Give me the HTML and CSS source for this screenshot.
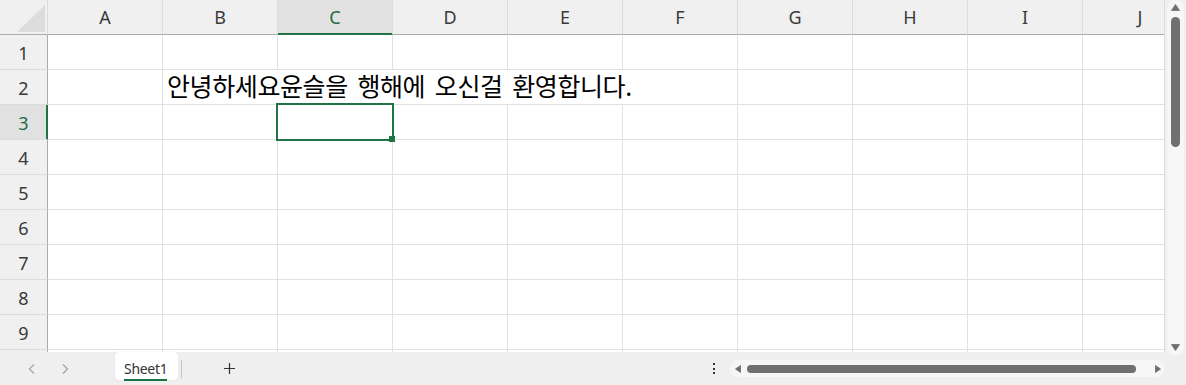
FILE: index.html
```html
<!DOCTYPE html>
<html lang="ko">
<head>
<meta charset="utf-8">
<title>Sheet1</title>
<link rel="stylesheet" href="styles.css">
</head>
<body>
<div class="app">
  <div class="sheet">
    <div class="grid">
      <div class="ch corner"><i class="tri"></i></div>
      <div class="ch">A</div><div class="ch">B</div><div class="ch sel">C</div><div class="ch">D</div><div class="ch">E</div><div class="ch">F</div><div class="ch">G</div><div class="ch">H</div><div class="ch">I</div><div class="ch">J</div>

      <div class="rh">1</div>
      <div class="c"></div><div class="c"></div><div class="c"></div><div class="c"></div><div class="c"></div><div class="c"></div><div class="c"></div><div class="c"></div><div class="c"></div><div class="c"></div>

      <div class="rh">2</div>
      <div class="c"></div><div class="c txt">안녕하세요윤슬을 행해에 오신걸 환영합니다.</div><div class="c"></div><div class="c"></div><div class="c"></div><div class="c"></div>

      <div class="rh sel">3</div>
      <div class="c"></div><div class="c"></div><div class="c act"></div><div class="c"></div><div class="c"></div><div class="c"></div><div class="c"></div><div class="c"></div><div class="c"></div><div class="c"></div>

      <div class="rh">4</div>
      <div class="c"></div><div class="c"></div><div class="c"></div><div class="c"></div><div class="c"></div><div class="c"></div><div class="c"></div><div class="c"></div><div class="c"></div><div class="c"></div>

      <div class="rh">5</div>
      <div class="c"></div><div class="c"></div><div class="c"></div><div class="c"></div><div class="c"></div><div class="c"></div><div class="c"></div><div class="c"></div><div class="c"></div><div class="c"></div>

      <div class="rh">6</div>
      <div class="c"></div><div class="c"></div><div class="c"></div><div class="c"></div><div class="c"></div><div class="c"></div><div class="c"></div><div class="c"></div><div class="c"></div><div class="c"></div>

      <div class="rh">7</div>
      <div class="c"></div><div class="c"></div><div class="c"></div><div class="c"></div><div class="c"></div><div class="c"></div><div class="c"></div><div class="c"></div><div class="c"></div><div class="c"></div>

      <div class="rh">8</div>
      <div class="c"></div><div class="c"></div><div class="c"></div><div class="c"></div><div class="c"></div><div class="c"></div><div class="c"></div><div class="c"></div><div class="c"></div><div class="c"></div>

      <div class="rh">9</div>
      <div class="c"></div><div class="c"></div><div class="c"></div><div class="c"></div><div class="c"></div><div class="c"></div><div class="c"></div><div class="c"></div><div class="c"></div><div class="c"></div>

      <div class="rh"></div>
      <div class="c"></div><div class="c"></div><div class="c"></div><div class="c"></div><div class="c"></div><div class="c"></div><div class="c"></div><div class="c"></div><div class="c"></div><div class="c"></div>
    </div>
  </div>

  <div class="vscroll">
    <div class="vtrack">
      <svg class="arr-up" width="9" height="7" viewBox="0 0 9 7"><polygon points="4.5,0.5 8.5,6.5 0.5,6.5" fill="#6e6e6e" stroke="#6e6e6e" stroke-linejoin="round" stroke-width="0.8"/></svg>
      <div class="vthumb"></div>
      <div class="vfill"></div>
      <svg class="arr-down" width="9" height="7" viewBox="0 0 9 7"><polygon points="0.5,0.5 8.5,0.5 4.5,6.5" fill="#6e6e6e" stroke="#6e6e6e" stroke-linejoin="round" stroke-width="0.8"/></svg>
    </div>
  </div>

  <div class="bar">
    <svg class="nav nav-prev" width="8" height="10" viewBox="0 0 8 10"><polyline points="6,0.5 1.5,5 6,9.5" fill="none" stroke="#a3a3a3" stroke-width="1.2"/></svg>
    <svg class="nav nav-next" width="8" height="10" viewBox="0 0 8 10"><polyline points="2,0.5 6.5,5 2,9.5" fill="none" stroke="#a3a3a3" stroke-width="1.2"/></svg>
    <div class="tab"><span class="tab-label">Sheet1</span></div>
    <div class="sep"></div>
    <svg class="plus" width="11" height="11" viewBox="0 0 11 11"><path d="M5.5 0v11M0 5.5h11" stroke="#333" stroke-width="1.2" fill="none"/></svg>
    <div class="spacer"></div>
    <div class="dots"><i></i><i></i><i></i></div>
    <div class="htrack">
      <svg class="arr-left" width="6" height="8" viewBox="0 0 6 8"><polygon points="5.5,0.5 5.5,7.5 0.5,4" fill="#6e6e6e" stroke="#6e6e6e" stroke-linejoin="round" stroke-width="0.8"/></svg>
      <div class="hthumb"></div>
      <svg class="arr-right" width="6" height="8" viewBox="0 0 6 8"><polygon points="0.5,0.5 0.5,7.5 5.5,4" fill="#6e6e6e" stroke="#6e6e6e" stroke-linejoin="round" stroke-width="0.8"/></svg>
    </div>
  </div>
</div>
</body>
</html>
```

FILE: styles.css
```css
* {
  box-sizing: border-box;
  margin: 0;
  padding: 0;
}

body {
  margin: 0;
  width: 1186px;
  height: 385px;
  overflow: hidden;
  background: #efefef;
  font-family: "Noto Sans", "Open Sans", sans-serif;
}

.app {
  display: grid;
  grid-template-columns: 1165px 21px;
  grid-template-rows: 352px 33px;
  height: 385px;
}

/* ---------- sheet grid ---------- */
.sheet {
  overflow: hidden;
  background: #fff;
  border-right: 1px solid #dedede;
}

.grid {
  display: grid;
  grid-template-columns: 48px repeat(10, 115px);
  grid-auto-rows: 35px;
  width: max-content;
}

.c {
  background: #fff;
  border-right: 1px solid #e1e1e1;
  border-bottom: 1px solid #e1e1e1;
}

.ch {
  background: #f0f0f0;
  border-right: 1px solid #dcdcdc;
  border-bottom: 1px solid #ababab;
  display: flex;
  align-items: center;
  justify-content: center;
  font-size: 18px;
  color: #3a3a3a;
}

.ch.sel {
  background: #e1e1e1;
  color: #1e6b41;
  border-bottom-color: #217346;
  box-shadow: inset 0 -1px 0 #217346;
}

.corner {
  justify-content: flex-end;
  align-items: flex-end;
  padding: 0 2px 2px 0;
}

.tri {
  display: block;
  width: 28px;
  height: 27px;
  background: #dcdcdc;
  clip-path: polygon(100% 0, 100% 100%, 0 100%);
}

.rh {
  background: #f0f0f0;
  border-right: 1px solid #ababab;
  border-bottom: 1px solid #dcdcdc;
  display: flex;
  align-items: center;
  justify-content: center;
  padding-top: 2px;
  font-size: 18px;
  color: #3a3a3a;
}

.rh.sel {
  background: #e1e1e1;
  color: #1e6b41;
  border-right-color: #217346;
  box-shadow: inset -1px 0 0 #217346;
}

.txt {
  grid-column: span 5;
  display: flex;
  align-items: center;
  padding: 0 0 5px 4px;
  font-family: "Noto Sans CJK KR", "Noto Sans", sans-serif;
  font-size: 25px;
  letter-spacing: -0.4px;
  word-spacing: 3px;
  white-space: nowrap;
  color: #000;
}

.act {
  position: relative;
  z-index: 1;
}

.act::before {
  content: "";
  position: absolute;
  inset: -2px;
  border: 2px solid #217346;
}

.act::after {
  content: "";
  position: absolute;
  right: -3px;
  bottom: -3px;
  width: 6px;
  height: 6px;
  background: #217346;
}

/* ---------- vertical scrollbar ---------- */
.vscroll {
  grid-row: 1 / span 2;
  grid-column: 2;
  padding: 0 2px 29px 2px;
  background: #efefef;
}

.vtrack {
  height: 100%;
  background: #f6f6f6;
  border-radius: 9px;
  display: flex;
  flex-direction: column;
  align-items: center;
}

.arr-up {
  margin-top: 4px;
  display: block;
}

.vthumb {
  margin-top: 6px;
  width: 9px;
  height: 130px;
  border-radius: 5px;
  background: #707070;
}

.vfill {
  flex: 1;
}

.arr-down {
  display: block;
  margin-bottom: 5px;
}

/* ---------- bottom bar ---------- */
.bar {
  grid-row: 2;
  grid-column: 1;
  display: flex;
  align-items: center;
  background: #efefef;
}

.nav {
  display: block;
  flex: none;
}

.nav-prev {
  margin-left: 28px;
}

.nav-next {
  margin-left: 25px;
}

.tab {
  align-self: flex-start;
  margin-left: 46px;
  width: 63px;
  height: 28px;
  background: #fff;
  border-radius: 4px;
  box-shadow: 0 0 1px rgba(0, 0, 0, 0.18);
  padding: 5px 0 0 9px;
}

.tab-label {
  display: inline-block;
  font-size: 14px;
  line-height: 18px;
  letter-spacing: -0.3px;
  color: #333;
  padding-bottom: 1px;
  border-bottom: 2px solid #1a7343;
}

.sep {
  margin-left: 3px;
  width: 1px;
  height: 18px;
  background: #c6c6c6;
}

.plus {
  display: block;
  margin-left: 42px;
}

.spacer {
  flex: 1;
}

.dots {
  display: flex;
  flex-direction: column;
  gap: 2.5px;
  margin-right: 15px;
}

.dots i {
  display: block;
  width: 2px;
  height: 2px;
  background: #333;
}

.htrack {
  width: 435px;
  height: 17px;
  background: #f6f6f6;
  border-radius: 9px;
  display: flex;
  align-items: center;
  padding-left: 5px;
}

.arr-left,
.arr-right {
  display: block;
  flex: none;
}

.hthumb {
  margin-left: 6px;
  width: 389px;
  height: 8px;
  border-radius: 4px;
  background: #707070;
}

.arr-right {
  margin-left: 19px;
}
```
